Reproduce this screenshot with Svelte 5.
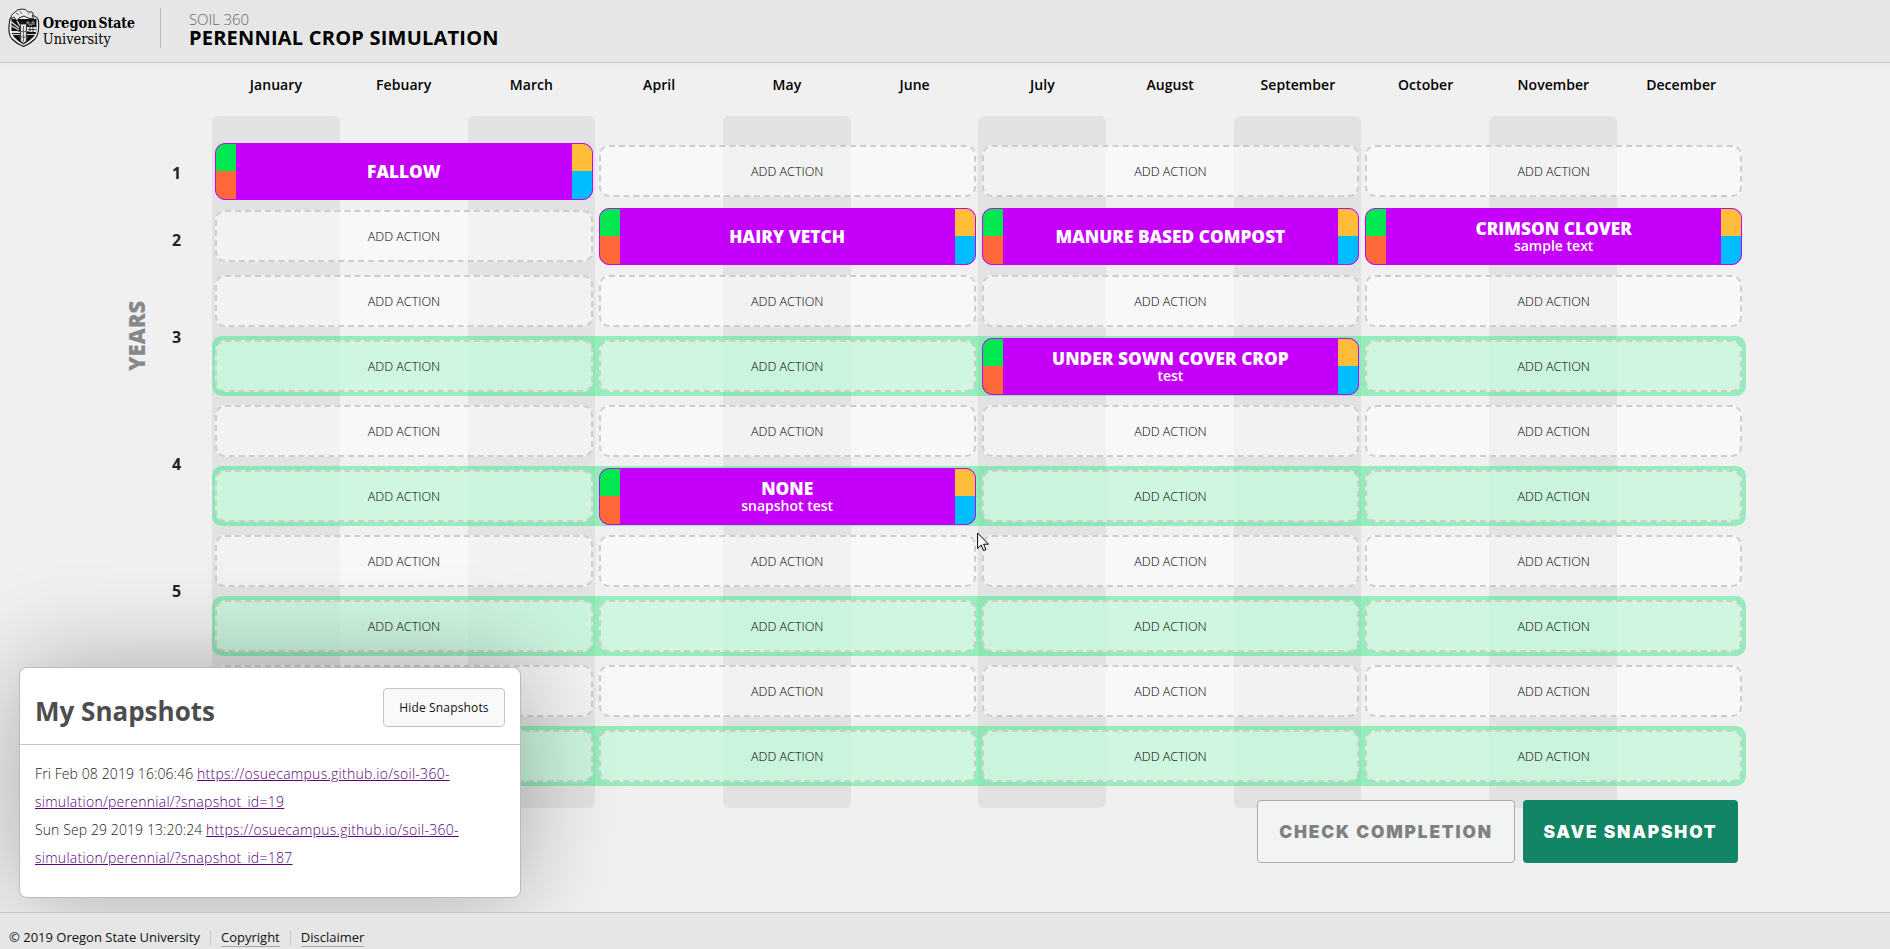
<script>
  const months = ['January', 'Febuary', 'March', 'April', 'May', 'June', 'July', 'August', 'September', 'October', 'November', 'December'];
  const years = [1, 2, 3, 4, 5];
  const crops = {
    '0-0': { name: 'FALLOW' },
    '1-1': { name: 'HAIRY VETCH' },
    '1-2': { name: 'MANURE BASED COMPOST' },
    '1-3': { name: 'CRIMSON CLOVER', note: 'sample text' },
    '3-2': { name: 'UNDER SOWN COVER CROP', note: 'test' },
    '5-1': { name: 'NONE', note: 'snapshot test' }
  };
  const rows = Array.from({ length: 10 }, (_, r) => ({
    green: r >= 3 && r % 2 === 1,
    cells: [0, 1, 2, 3].map((c) => crops[`${r}-${c}`] ?? null)
  }));
  const snapshots = [
    { date: 'Fri Feb 08 2019 16:06:46', id: 19 },
    { date: 'Sun Sep 29 2019 13:20:24', id: 187 }
  ];
</script>

<div class="page">
  <header>
    <svg class="logo" width="132" height="44" viewBox="0 0 132 44" aria-label="Oregon State University">
      <path d="M1.5 14 Q1 9 8 7 Q15 5.500 23 7 Q31 9 30.500 14 Q31.500 26 27 31 Q22 36 15.500 38.500 Q9 36 4 31 Q-.5 26 1.500 14Z" fill="#eee" stroke="#111" stroke-width="1.1" />
      <path d="M3.500 11 H28.500 V23 Q28 29 15.500 36.500 Q3 29 3.500 23Z" fill="#101010" />
      <path d="M3.500 14 L11 20 M3.500 18 L11 22 M8 11 L12 18" stroke="#e6e6e6" stroke-width="1.300" />
      <path d="M2.500 23 H12 V25 H3Z M19 19 H28.500 V24 H19Z" fill="#e6e6e6" />
      <path d="M4 26.500 H12 M19 26.500 H27" stroke="#ddd" stroke-width="1" />
      <path d="M20 21.500 H28 M22 19 V24 M25 19 V24" stroke="#222" stroke-width=".8" />
      <path d="M12.500 16 H18.500 V33 L15.500 35.500 L12.500 33Z" fill="#ddd" stroke="#222" stroke-width=".7" />
      <path d="M15.500 18 V34 M10 23.500 H21 M11 29 H20" stroke="#666" stroke-width="1" />
      <path d="M19 16 v-2 h2 v3 h3 v-3 h2 v3" fill="none" stroke="#bbb" stroke-width=".9" />
      <path d="M3 11 Q2 7 6 5 Q9 .8 14 1 Q18 .8 20 4 L24 4 Q27 6 24 8 L26 11 L20 10 L16 8 L11 10 L9 13 L6 9Z" fill="#ececec" stroke="#222" stroke-width="1" />
      <path d="M8 5 L11 7 M12 3 L14 6 M20 6 h1" stroke="#444" stroke-width=".8" />
      <text class="logo-name" x="34.800" y="20" textLength="54" lengthAdjust="spacingAndGlyphs">Oregon</text>
      <text class="logo-name" x="90.500" y="20" textLength="36.500" lengthAdjust="spacingAndGlyphs">State</text>
      <text class="logo-sub" x="34.800" y="35.500" textLength="68" lengthAdjust="spacingAndGlyphs">University</text>
    </svg>
    <div class="titles">
      <span class="course">SOIL 360</span>
      <h1>PERENNIAL CROP SIMULATION</h1>
    </div>
  </header>

  <main>
    <div class="months">
      {#each months as month}<span>{month}</span>{/each}
    </div>
    <div class="board">
      <div class="side">
        <div class="caption">YEARS</div>
        <ol class="years">
          {#each years as year}<li>{year}</li>{/each}
        </ol>
      </div>
      <div class="calendar">
        <div class="columns">
          {#each months as month}<i></i>{/each}
        </div>
        <div class="rows">
          {#each rows as row}
            <div class="row" class:green={row.green}>
              {#each row.cells as crop}
                {#if crop}
                  <div class="crop">
                    <i class="strip left"></i>
                    <div class="label">
                      <b>{crop.name}</b>
                      {#if crop.note}<span>{crop.note}</span>{/if}
                    </div>
                    <i class="strip right"></i>
                  </div>
                {:else}
                  <div class="slot">ADD ACTION</div>
                {/if}
              {/each}
            </div>
          {/each}
        </div>
      </div>
    </div>
    <div class="actions">
      <button class="check">CHECK COMPLETION</button>
      <button class="save">SAVE SNAPSHOT</button>
    </div>
  </main>

  <footer>
    <span>© 2019 Oregon State University</span>
    <i></i>
    <u>Copyright</u>
    <i></i>
    <u>Disclaimer</u>
  </footer>

  <section class="snapshots">
    <div class="snap-head">
      <h2>My Snapshots</h2>
      <button>Hide Snapshots</button>
    </div>
    <div class="snap-list">
      {#each snapshots as snap}
        <p>{snap.date} <a href="#top">https://osuecampus.github.io/soil-360-<br />simulation/perennial/?snapshot_id={snap.id}</a></p>
      {/each}
    </div>
  </section>

  <svg class="pointer" width="13" height="20" viewBox="0 0 13 20">
    <path d="M.6 1 V16.500 L4.200 13 L6.700 18.500 L9 17.500 L6.600 12.200 H11.500Z" fill="#fff" stroke="#000" />
  </svg>
</div>

<style>
  :global(body) { margin: 0; overflow: hidden; }
  * { box-sizing: border-box; }
  .page {
    position: relative;
    display: flex;
    flex-direction: column;
    height: 949px;
    overflow: hidden;
    background: #f0f0f0;
    color: #000;
    font-family: 'Open Sans', sans-serif;
  }
  header {
    display: flex;
    flex: none;
    height: 63px;
    padding: 8px 0 0 8px;
    background: #e6e6e6;
    border-bottom: 1px solid #c8c8c8;
  }
  .logo { flex: none; }
  .logo-name { font: bold 14.500px 'DejaVu Serif Condensed', 'DejaVu Serif', serif; }
  .logo-sub { font: 14.500px 'DejaVu Serif Condensed', 'DejaVu Serif', serif; }
  .titles {
    height: 40px;
    margin-left: 20px;
    padding: 2px 0 0 28px;
    border-left: 1px solid #bbb;
  }
  .course { display: block; font-size: 15px; line-height: 19px; font-weight: 350; color: #666; letter-spacing: -.1px; }
  h1 { margin: 0; font-size: 20px; line-height: 18px; font-weight: 720; letter-spacing: .220px; white-space: nowrap; }
  main {
    flex: none;
    height: 849px;
    background: linear-gradient(#ececec, #f0f0f0 10px);
  }
  .months {
    display: grid;
    grid-template-columns: repeat(12, 1fr);
    width: 1533px;
    height: 53px;
    margin-left: 212px;
    padding-top: 11px;
    text-align: center;
    font-size: 14px;
    line-height: 22px;
    font-weight: 560;
    letter-spacing: .050px;
  }
  .board { display: flex; }
  .side { display: flex; flex: none; width: 212.300px; }
  .caption {
    width: 32px;
    height: 80px;
    margin: 180px 0 0 120px;
    writing-mode: vertical-rl;
    transform: rotate(180deg);
    line-height: 32px;
    font-size: 22px;
    font-weight: 800;
    color: #888;
    text-align: center;
  }
  .years { list-style: none; margin: 45px 0 0; padding: 0; width: 49px; font-size: 16px; line-height: 24px; font-weight: 700; color: #222; text-align: center; }
  .years li { height: 127px; }
  .years li:first-child { height: 67px; }
  .years li:nth-child(2) { height: 97px; }
  .calendar { display: grid; grid-template-columns: 1533px; width: 1533px; height: 692px; }
  .columns, .rows { grid-area: 1 / 1; }
  .columns { display: grid; grid-template-columns: repeat(12, 127.700px); }
  .columns i { border-radius: 6px; }
  .columns i:nth-child(odd) { background: #e2e2e2; }
  .rows { display: flex; flex-direction: column; gap: 5px; padding-top: 25px; }
  .row {
    display: grid;
    grid-template-columns: repeat(4, 1fr);
    align-items: center;
    height: 60px;
    flex: none;
    margin-right: -1px;
    padding-right: 1px;
    border-radius: 10px;
  }
  .green { background: rgba(56, 234, 134, .5); }
  .slot {
    height: 52px;
    margin: 0 3px;
    border: 2px dashed #cdcdcd;
    border-radius: 10px;
    background: rgba(255, 255, 255, .55);
    text-align: center;
    font-size: 12.600px;
    line-height: 50px;
    color: #000;
    font-weight: 300;
  }
  .crop {
    display: flex;
    height: 57px;
    margin: 0 3px;
    border: 1px solid #c400fb;
    border-radius: 10px;
    overflow: hidden;
    background: #c400fb;
    color: #fff;
  }
  .strip { width: 20px; }
  .left { background: linear-gradient(#00e850 27px, #ff6838 27px); }
  .right { background: linear-gradient(#ffbd3a 27px, #00bdff 27px); }
  .label { flex: 1; display: flex; flex-direction: column; justify-content: center; padding-top: 2px; text-align: center; }
  .label b { font-size: 17.300px; line-height: 18px; font-weight: 800; }
  .label span { font-size: 14px; line-height: 16px; font-weight: 600; }
  .actions {
    position: relative;
    display: flex;
    justify-content: flex-end;
    gap: 8px;
    margin-top: -8px;
    padding-right: 152px;
  }
  button { padding: 0; font-family: inherit; }
  .actions button {
    height: 63px;
    padding: 0 0 1px;
    border-radius: 4px;
    font: 900 17.300px Inter, sans-serif;
    letter-spacing: 1.850px;
    white-space: nowrap;
  }
  .actions .check { width: 258px; background: #f1f4f3; border: 1px solid #aaa; color: #808080; }
  .actions .save { width: 215px; background: #118565; border: 0; color: #fff; }
  footer {
    display: flex;
    flex: none;
    height: 60px;
    padding: 14px 0 0 9px;
    border-top: 1px solid #c8c8c8;
    background: #e6e6e6;
    font-size: 13px;
    line-height: 20px;
    color: #111;
  }
  footer i { width: 1px; height: 14px; margin: 4px 10px 0; background: #c6c6c6; }
  footer u { height: 20px; text-decoration: none; border-bottom: 1px solid #aaa; }
  .snapshots {
    position: absolute;
    left: 19px;
    top: 667px;
    width: 502px;
    height: 231px;
    background: #fff;
    border: 1px solid #bbb;
    border-radius: 8px;
    box-shadow: 0 0 100px rgba(0, 0, 0, .3);
    clip-path: inset(-120px -120px -14px -20px round 0);
  }
  .snap-head {
    display: flex;
    justify-content: space-between;
    height: 77px;
    padding: 20px 15px 0;
    border-bottom: 1px solid #c4c4c4;
  }
  h2 { margin: 3px 0 0; font-size: 26px; line-height: 40px; font-weight: 700; color: #4d4d4d; }
  .snap-head button {
    width: 122px;
    height: 39px;
    background: #f9f9f9;
    border: 1px solid #c4c4c4;
    border-radius: 4px;
    font-size: 12px;
    font-weight: 500;
    letter-spacing: .150px;
    color: #111;
  }
  .snap-list { padding: 15px; font-size: 14px; line-height: 28px; font-weight: 300; letter-spacing: .100px; color: #222; }
  .snap-list p { margin: 0; white-space: nowrap; }
  a { color: #5c0080; letter-spacing: .270px; }
  .pointer { position: absolute; left: 977px; top: 532px; }
</style>
